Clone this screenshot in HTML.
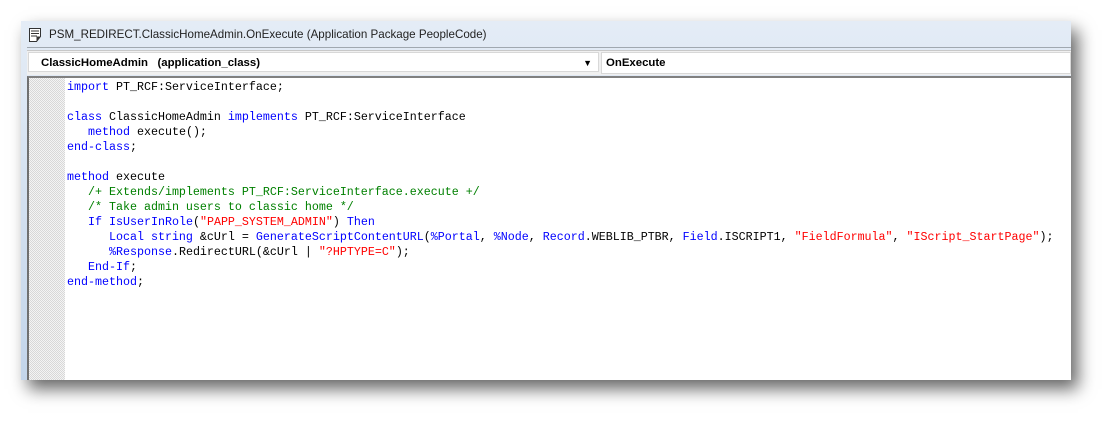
<!DOCTYPE html>
<html><head><style>
body{margin:0;width:1113px;height:422px;background:#fff;position:relative;overflow:hidden;font-family:"Liberation Sans",sans-serif}
#win{position:absolute;left:21px;top:21px;width:1050px;height:359px;background:linear-gradient(#e4ecf6,#c3d5ea);box-shadow:7px 9px 16px rgba(0,0,0,.6)}
#title{position:absolute;left:28px;top:7px;font-size:11.6px;color:#222;}
#icon{position:absolute;left:7px;top:6px}
#sep{position:absolute;left:6px;right:0;top:26px;height:1px;background:#a0a8b0}
#dd{position:absolute;left:6px;right:0;top:29px;height:24px;background:#f0f0f0;border-top:1px solid #c8c8c8}
.box{position:absolute;top:1px;height:20px;background:#fff;border:1px solid #d8d8d8;font-weight:bold;font-size:11.4px;line-height:20px}
#code{position:absolute;left:6px;right:0;top:55px;bottom:0;background:#fff;border-top:2px solid #808080;border-left:2px solid #707070}
#gut{position:absolute;left:0;top:0;bottom:0;width:36px;background-color:#ececec;background-image:repeating-conic-gradient(#d8d8d8 0 25%,#f4f4f4 0 50%);background-size:2px 2px}
pre{position:absolute;left:38px;top:2px;margin:0;font-family:"Liberation Mono",monospace;font-size:11.67px;line-height:15px;color:#000}
.k{color:#0000ff}.c{color:#008000}.s{color:#ff0000}
</style></head><body>
<div id="win">
<svg id="icon" width="16" height="16" viewBox="0 0 16 16"><path d="M1.5 1.5h11v8l-4 5h-7z" fill="#fff" stroke="#333"/><path d="M3 4h8M3 6.5h8M3 9h6" stroke="#333"/><path d="M12.5 9.5l-4 5v-5z" fill="#333"/></svg>
<div id="title">PSM_REDIRECT.ClassicHomeAdmin.OnExecute (Application Package PeopleCode)</div>
<div id="sep"></div>
<div id="dd">
<div class="box" style="left:1px;width:571px;padding-left:12px;box-sizing:border-box">ClassicHomeAdmin &nbsp;&nbsp;(application_class)<span style="position:absolute;right:6px;top:0;font-size:9px">▼</span></div>
<div class="box" style="left:574px;right:0;padding-left:4px">OnExecute</div>
</div>
<div id="code"><div id="gut"></div>
<pre><span class="k">import</span> PT_RCF:ServiceInterface;

<span class="k">class</span> ClassicHomeAdmin <span class="k">implements</span> PT_RCF:ServiceInterface
   <span class="k">method</span> execute();
<span class="k">end-class</span>;

<span class="k">method</span> execute
   <span class="c">/+ Extends/implements PT_RCF:ServiceInterface.execute +/</span>
   <span class="c">/* Take admin users to classic home */</span>
   <span class="k">If</span> <span class="k">IsUserInRole</span>(<span class="s">"PAPP_SYSTEM_ADMIN"</span>) <span class="k">Then</span>
      <span class="k">Local string</span> &amp;cUrl = <span class="k">GenerateScriptContentURL</span>(<span class="k">%Portal</span>, <span class="k">%Node</span>, <span class="k">Record</span>.WEBLIB_PTBR, <span class="k">Field</span>.ISCRIPT1, <span class="s">"FieldFormula"</span>, <span class="s">"IScript_StartPage"</span>);
      <span class="k">%Response</span>.RedirectURL(&amp;cUrl | <span class="s">"?HPTYPE=C"</span>);
   <span class="k">End-If</span>;
<span class="k">end-method</span>;</pre>
</div>
</div>
</body></html>
